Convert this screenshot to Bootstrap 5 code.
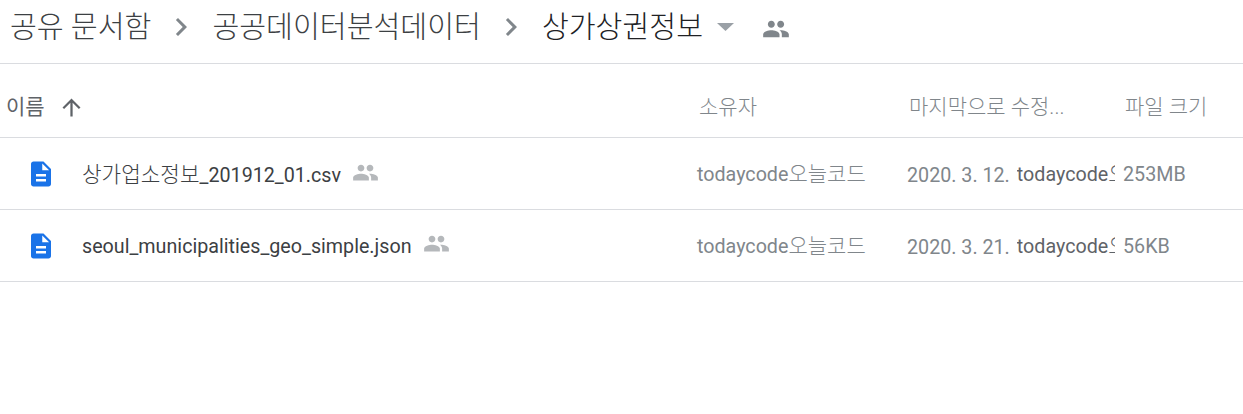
<!DOCTYPE html>
<html lang="ko">
<head>
    <meta charset="UTF-8">
    <title>상가상권정보</title>
    <link href="https://cdn.jsdelivr.net/npm/bootstrap@5.3.3/dist/css/bootstrap.min.css" rel="stylesheet">
    <style>
        body {
            font-family: Roboto, "Noto Sans CJK KR", sans-serif;
            background: #fff;
            overflow: hidden;
        }
        .path-bar {
            height: 64px;
            padding: 0 0 9px 10px;
            border-bottom: 1px solid #dadce0;
        }
        .crumb {
            font-size: 29.2px;
            line-height: 36px;
            font-weight: 300;
            color: #3c4043;
        }
        .crumb-now { color: #202124; }
        .crumb-sep { width: 36px; height: 36px; margin: 0 13px 0 12px; fill: #80868b; }
        .caret-icon { width: 17px; height: 8px; margin: 0 28px 0 14px; fill: #9aa0a6; }
        .share-top { width: 28px; height: 28px; margin-top: 4px; fill: #80868b; }
        .head-row, .file-row { border-bottom: 1px solid #dadce0; }
        .head-row { height: 74px; padding-top: 14px; color: #80868b; font-size: 21px; font-weight: 300; }
        .file-row { height: 72px; padding-top: 1px; font-size: 19.7px; color: #80868b; }
        .col-name { width: 699px; }
        .col-owner { width: 210px; }
        .col-date { width: 216px; }
        .file-row .col-name { width: 697px; }
        .head-name { padding-left: 6px; font-weight: 400; color: #5f6368; }
        .sort-icon { width: 27px; height: 27px; margin-left: 13px; fill: #5f6368; }
        .doc-icon { width: 30px; height: 30px; margin-left: 26px; margin-right: 26px; fill: #1a73e8; }
        .file-name { color: #3c4043; white-space: nowrap; }
        .ko { font-size: 21px; font-weight: 300; }
        .file-name .ko { font-size: 21.3px; }
        .share-small { width: 27px; height: 27px; margin-left: 11px; margin-top: -4px; fill: #b5b8bb; }
        .owner-cut { display: inline-block; width: 98px; overflow: hidden; white-space: nowrap; vertical-align: bottom; margin-left: 7px; color: #5f6368; }
        .cell-text { white-space: nowrap; padding-top: 2px; }
    </style>
</head>
<body>

    <div class="path-bar d-flex align-items-center">
        <span class="crumb">공유 문서함</span>
        <svg class="crumb-sep" viewBox="0 0 24 24"><path d="M10 6L8.59 7.41 13.17 12l-4.58 4.59L10 18l6-6z"/></svg>
        <span class="crumb">공공데이터분석데이터</span>
        <svg class="crumb-sep" viewBox="0 0 24 24"><path d="M10 6L8.59 7.41 13.17 12l-4.58 4.59L10 18l6-6z"/></svg>
        <span class="crumb crumb-now">상가상권정보</span>
        <svg class="caret-icon" viewBox="0 0 17 8"><path d="M0 0h17L8.5 8z"/></svg>
        <svg class="share-top" viewBox="0 0 24 24"><path d="M16 11c1.66 0 2.99-1.34 2.99-3S17.66 5 16 5c-1.66 0-3 1.34-3 3s1.34 3 3 3zm-8 0c1.66 0 2.99-1.34 2.99-3S9.66 5 8 5C6.34 5 5 6.34 5 8s1.34 3 3 3zm0 2c-2.33 0-7 1.17-7 3.5V19h14v-2.5c0-2.33-4.67-3.5-7-3.5zm8 0c-.29 0-.62.02-.97.05 1.16.84 1.97 1.97 1.97 3.45V19h6v-2.5c0-2.33-4.67-3.5-7-3.5z"/></svg>
    </div>

    <div class="head-row d-flex align-items-center">
        <div class="col-name head-name d-flex align-items-center">
            <span>이름</span>
            <svg class="sort-icon" viewBox="0 0 24 24"><path d="M4 12l1.41 1.41L11 7.83V20h2V7.83l5.58 5.59L20 12l-8-8-8 8z"/></svg>
        </div>
        <div class="col-owner">소유자</div>
        <div class="col-date">마지막으로 수정...</div>
        <div>파일 크기</div>
    </div>

    <div class="file-row d-flex align-items-center">
        <div class="col-name d-flex align-items-center">
            <svg class="doc-icon" viewBox="0 0 24 24"><path d="M14 2H6c-1.1 0-1.99.9-1.99 2L4 20c0 1.1.89 2 1.99 2H18c1.1 0 2-.9 2-2V8l-6-6zm2 16H8v-2h8v2zm0-4H8v-2h8v2zm-3-5V3.5L18.5 9H13z"/></svg>
            <span class="file-name cell-text"><span class="ko">상가업소정보</span>_201912_01.csv</span>
            <svg class="share-small" viewBox="0 0 24 24"><path d="M16 11c1.66 0 2.99-1.34 2.99-3S17.66 5 16 5c-1.66 0-3 1.34-3 3s1.34 3 3 3zm-8 0c1.66 0 2.99-1.34 2.99-3S9.66 5 8 5C6.34 5 5 6.34 5 8s1.34 3 3 3zm0 2c-2.33 0-7 1.17-7 3.5V19h14v-2.5c0-2.33-4.67-3.5-7-3.5zm8 0c-.29 0-.62.02-.97.05 1.16.84 1.97 1.97 1.97 3.45V19h6v-2.5c0-2.33-4.67-3.5-7-3.5z"/></svg>
        </div>
        <div class="col-owner cell-text">todaycode<span class="ko">오늘코드</span></div>
        <div class="col-date cell-text">2020. 3. 12.<span class="owner-cut">todaycode<span class="ko">오늘코드</span></span></div>
        <div class="cell-text">253MB</div>
    </div>

    <div class="file-row d-flex align-items-center">
        <div class="col-name d-flex align-items-center">
            <svg class="doc-icon" viewBox="0 0 24 24"><path d="M14 2H6c-1.1 0-1.99.9-1.99 2L4 20c0 1.1.89 2 1.99 2H18c1.1 0 2-.9 2-2V8l-6-6zm2 16H8v-2h8v2zm0-4H8v-2h8v2zm-3-5V3.5L18.5 9H13z"/></svg>
            <span class="file-name cell-text">seoul_municipalities_geo_simple.json</span>
            <svg class="share-small" viewBox="0 0 24 24"><path d="M16 11c1.66 0 2.99-1.34 2.99-3S17.66 5 16 5c-1.66 0-3 1.34-3 3s1.34 3 3 3zm-8 0c1.66 0 2.99-1.34 2.99-3S9.66 5 8 5C6.34 5 5 6.34 5 8s1.34 3 3 3zm0 2c-2.33 0-7 1.17-7 3.5V19h14v-2.5c0-2.33-4.67-3.5-7-3.5zm8 0c-.29 0-.62.02-.97.05 1.16.84 1.97 1.97 1.97 3.45V19h6v-2.5c0-2.33-4.67-3.5-7-3.5z"/></svg>
        </div>
        <div class="col-owner cell-text">todaycode<span class="ko">오늘코드</span></div>
        <div class="col-date cell-text">2020. 3. 21.<span class="owner-cut">todaycode<span class="ko">오늘코드</span></span></div>
        <div class="cell-text">56KB</div>
    </div>

    <script src="https://cdn.jsdelivr.net/npm/bootstrap@5.3.3/dist/js/bootstrap.bundle.min.js"></script>
</body>
</html>
